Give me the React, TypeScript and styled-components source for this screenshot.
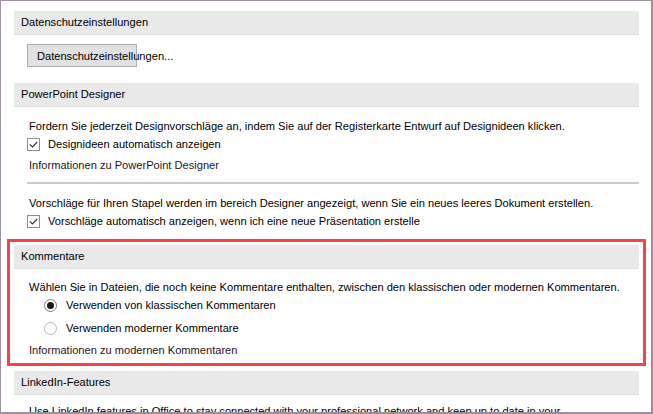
import React from 'react'
import styled, { createGlobalStyle } from 'styled-components'

const GlobalStyle = createGlobalStyle`
    html, body {
        margin: 0;
        padding: 0;
        background: #ffffff;
    }
    body {
        font-family: "Liberation Sans", Arial, sans-serif;
        font-size: 11.1px;
        color: #000000;
    }
    * {
        box-sizing: border-box;
    }
`

const Frame = styled.div`
    width: 653px;
    height: 414px;
    overflow: hidden;
    border-top: 1px solid #9d8fa0;
    border-left: 1px solid #9d8fa0;
    border-right: 2px solid #9d8fa0;
    border-bottom: 2px solid #9d8fa0;
    background: #ffffff;
`

const Content = styled.div`
    display: flex;
    flex-direction: column;
    padding: 10px 12px 0 13px;
`

const SectionHeader = styled.div<{ $top?: number }>`
    height: 24px;
    line-height: 23px;
    padding-left: 7px;
    margin-top: ${p => p.$top ?? 0}px;
    background: #e9e9e9;
    border-bottom: 1px solid #e1e1e1;
    white-space: nowrap;
`

const Body = styled.div<{ $top?: number }>`
    display: flex;
    flex-direction: column;
    padding-left: 15px;
    margin-top: ${p => p.$top ?? 0}px;
`

const Line = styled.div`
    height: 18px;
    line-height: 18px;
    white-space: nowrap;
`

const LinkText = styled(Line)`
    color: #1e141e;
    margin-top: 3px;
`

const OptionRow = styled.label<{ $indent?: number; $top?: number }>`
    display: flex;
    align-items: center;
    gap: 8px;
    height: 18px;
    margin-left: ${p => p.$indent ?? -2}px;
    margin-top: ${p => p.$top ?? 0}px;
    white-space: nowrap;
`

const OptionLabel = styled.span<{ $gap?: number }>`
    margin-left: ${p => p.$gap ?? 0}px;
`

const Button = styled.button`
    align-self: flex-start;
    width: 110px;
    height: 23px;
    margin-left: -2px;
    padding: 0 0 0 9px;
    background: #e1e1e1;
    border: 1px solid #adadad;
    font: inherit;
    color: #000000;
    text-align: left;
    white-space: nowrap;
    overflow: visible;
`

const Separator = styled.div`
    height: 2px;
    margin: 8px 0 10px -2px;
    background: #cbcbcb;
`

const CheckBox = styled.span`
    display: inline-flex;
    align-items: center;
    justify-content: center;
    width: 13px;
    height: 13px;
    flex: 0 0 13px;
    border: 1px solid #8c8c8c;
    background: #ffffff;
`

const Radio = styled.span<{ $checked?: boolean }>`
    display: inline-flex;
    align-items: center;
    justify-content: center;
    width: 13px;
    height: 13px;
    flex: 0 0 13px;
    border-radius: 50%;
    border: 1px solid ${p => (p.$checked ? '#7c7c7c' : '#b9b9b9')};
    background: #ffffff;

    &::after {
        content: '';
        display: ${p => (p.$checked ? 'block' : 'none')};
        width: 7px;
        height: 7px;
        border-radius: 50%;
        background: #1a1a1a;
    }
`

const Highlight = styled.div`
    margin: 9px -7px 0 -7px;
    padding: 3px 4px 4px 4px;
    border: 3px solid #f0464a;
`

const Check = () => (
    <CheckBox>
        <svg width="9" height="7" viewBox="0 0 9 7">
            <path d="M0.8 3.4 L3.4 6 L8.2 1" fill="none" stroke="#333333" strokeWidth="1.1" />
        </svg>
    </CheckBox>
)

const App = () => {
    return (
        <>
            <GlobalStyle />
            <Frame>
                <Content>
                    <SectionHeader>Datenschutzeinstellungen</SectionHeader>
                    <Body $top={9}>
                        <Button type="button">Datenschutzeinstellungen...</Button>
                    </Body>

                    <SectionHeader $top={16}>PowerPoint Designer</SectionHeader>
                    <Body $top={10}>
                        <Line>Fordern Sie jederzeit Designvorschläge an, indem Sie auf der Registerkarte Entwurf auf Designideen klicken.</Line>
                        <OptionRow>
                            <Check />
                            <OptionLabel>Designideen automatisch anzeigen</OptionLabel>
                        </OptionRow>
                        <LinkText>Informationen zu PowerPoint Designer</LinkText>
                        <Separator />
                        <Line>Vorschläge für Ihren Stapel werden im bereich Designer angezeigt, wenn Sie ein neues leeres Dokument erstellen.</Line>
                        <OptionRow>
                            <Check />
                            <OptionLabel>Vorschläge automatisch anzeigen, wenn ich eine neue Präsentation erstelle</OptionLabel>
                        </OptionRow>
                    </Body>

                    <Highlight>
                        <SectionHeader>Kommentare</SectionHeader>
                        <Body $top={9}>
                            <Line>Wählen Sie in Dateien, die noch keine Kommentare enthalten, zwischen den klassischen oder modernen Kommentaren.</Line>
                            <OptionRow $indent={15}>
                                <Radio $checked />
                                <OptionLabel $gap={1}>Verwenden von klassischen Kommentaren</OptionLabel>
                            </OptionRow>
                            <OptionRow $indent={15} $top={5}>
                                <Radio />
                                <OptionLabel $gap={1}>Verwenden moderner Kommentare</OptionLabel>
                            </OptionRow>
                            <LinkText style={{ marginTop: 4 }}>Informationen zu modernen Kommentaren</LinkText>
                        </Body>
                    </Highlight>

                    <SectionHeader $top={5}>LinkedIn-Features</SectionHeader>
                    <Body $top={7}>
                        <Line>Use LinkedIn features in Office to stay connected with your professional network and keep up to date in your</Line>
                    </Body>
                </Content>
            </Frame>
        </>
    )
}

export default App
